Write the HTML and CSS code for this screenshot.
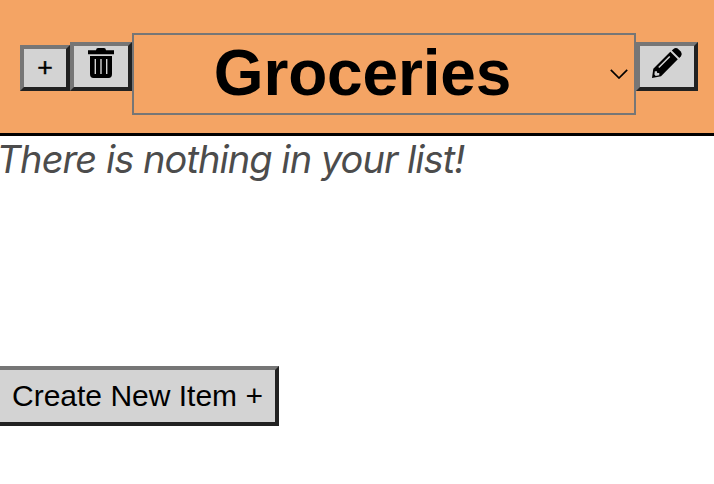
FILE: index.html
```html
<!DOCTYPE html>
<html lang="en">
<head>
<meta charset="utf-8">
<title>Groceries</title>
<link rel="stylesheet" href="styles.css">
</head>
<body>
<header class="toolbar">
  <button class="tool tool-add" aria-label="Add list">+</button>
  <button class="tool" aria-label="Delete list">
    <svg class="icon" viewBox="0 0 30 34">
      <path d="M2 4.2h8q.2-2.2 2-2.2h6q1.8 0 2 2.2h8v4H2z"/>
      <path fill-rule="evenodd" d="M4 10h22v18q0 4-3.5 4h-15Q4 32 4 28zM8.6 13v15h1.4V13zM14.3 13v15h1.4V13zM20 13v15h1.4V13z"/>
    </svg>
  </button>
  <div class="picker">
    <span class="picker-label">Groceries</span>
    <svg class="chevron" viewBox="0 0 18 10"><path d="M.8.9 9 9 17.2.9"/></svg>
  </div>
  <button class="tool" aria-label="Rename list">
    <svg class="icon" viewBox="0 0 30 34">
      <path d="M19.8 4.4 21.5 2.9q2.6-1.8 5.2.5l1.8 1.8q2.2 2.7.4 5l-1.6 1.7z"/>
      <path fill-rule="evenodd" d="M18.3 5.8 25.8 13.3 9 30.2 0 32l1.3-9.2zM2.8 25.3l-.4 3.3 1.3 1.4 3.6-.8v-2.1l-2.1-.2-.3-1.7zM6.2 20.9l1.1 1.1L18.3 11l-1.1-1.1z"/>
    </svg>
  </button>
</header>
<main>
  <p class="empty">There is nothing in your list!</p>
  <button class="create">Create New Item +</button>
</main>
</body>
</html>
```

FILE: styles.css
```css
* { box-sizing: border-box; }
body {
  margin: 0;
  background: #fff;
  color: #000;
  font-family: "Liberation Sans", Arial, sans-serif;
}
.toolbar {
  display: flex;
  align-items: flex-end;
  height: 136px;
  padding: 0 16px 18px 20px;
  background: #f4a464;
  border-bottom: 3px solid #000;
}
.tool, .create {
  margin: 0;
  color: #000;
  font-family: inherit;
  background: #d3d3d3;
  border: 4px solid;
  border-color: #767676 #212121 #212121 #767676;
  border-radius: 0;
}
.tool {
  display: flex;
  justify-content: center;
  width: 62px;
  height: 49px;
  margin-bottom: 24px;
  padding: 0;
}
.tool-add {
  align-items: center;
  width: 50px;
  height: 46px;
  padding-bottom: 2px;
  font-size: 26.67px;
  -webkit-text-stroke: .4px #000;
}
.icon {
  display: block;
  width: 30px;
  height: 34px;
  fill: #000;
}
.picker {
  display: flex;
  align-items: center;
  flex: 1;
  height: 82px;
  padding: 0 6px 2px 0;
  border: 2px solid #767676;
}
.picker-label {
  flex: 1;
  padding-right: 19px;
  font-size: 64px;
  line-height: 76px;
  letter-spacing: -.15px;
  font-weight: bold;
  text-align: center;
}
.chevron {
  width: 18px;
  height: 10px;
  margin-top: 2px;
  fill: none;
  stroke: #000;
  stroke-width: 1.7;
}
.empty {
  margin: 0 0 184px;
  color: #4c4c4c;
  font: italic 38px/46px Inter, sans-serif;
  letter-spacing: -.95px;
  text-indent: -3.5px;
  white-space: nowrap;
}
.create {
  display: block;
  height: 60px;
  margin-left: -4px;
  padding: 0 12px;
  font-size: 30px;
  line-height: 52px;
}
```
